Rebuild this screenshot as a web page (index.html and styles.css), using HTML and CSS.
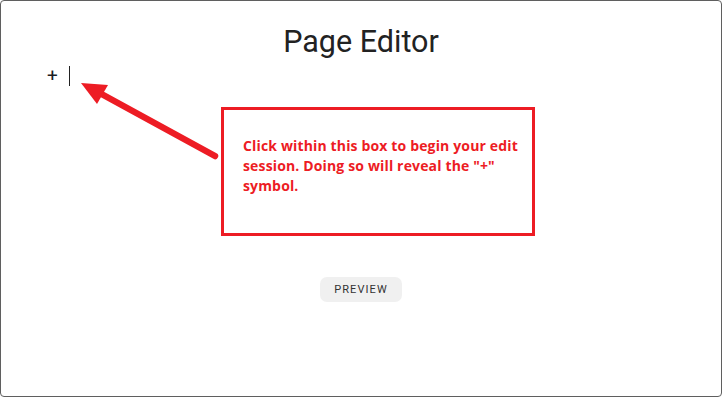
FILE: index.html
```html
<!DOCTYPE html>
<html lang="en">
<head>
    <meta charset="UTF-8">
    <meta name="viewport" content="width=device-width, initial-scale=1.0">
    <title>Page Editor</title>
    <link rel="stylesheet" href="styles.css">
</head>
<body>
    <div class="frame">
        <h1 class="title">Page Editor</h1>
        <div class="editor-row">
            <span class="add-btn">+</span>
            <span class="caret"></span>
        </div>
        <div class="actions">
            <button class="preview-btn">PREVIEW</button>
        </div>

        <!-- annotation layer -->
        <svg class="arrow" width="722" height="397" viewBox="0 0 722 397">
            <line x1="215" y1="156" x2="96" y2="91" stroke="#ed1c24" stroke-width="6.5" stroke-linecap="round"/>
            <polygon points="81,83 108,85 97,104" fill="#ed1c24"/>
        </svg>
        <div class="callout">
            Click within this box to begin your edit session. Doing so will reveal the "+" symbol.
        </div>
    </div>
</body>
</html>
```

FILE: styles.css
```css
body {
    margin: 0;
    background: #fff;
    font-family: Roboto, "Liberation Sans", sans-serif;
}
.frame {
    position: relative;
    box-sizing: border-box;
    width: 722px;
    height: 397px;
    border: 1px solid #5f5f5f;
    border-radius: 4px;
    background: #fff;
}
.title {
    margin: 25px 0 0;
    font-size: 30.5px;
    line-height: 32px;
    font-weight: 400;
    color: #222;
    text-align: center;
}
.editor-row {
    display: flex;
    align-items: center;
    height: 20px;
    margin-top: 8px;
    padding-left: 46px;
}
.add-btn {
    font-size: 19px;
    line-height: 20px;
    font-weight: 400;
    color: #1d1d24;
}
.caret {
    width: 1px;
    height: 20px;
    margin-left: 11px;
    background: #222;
}
.actions {
    display: flex;
    justify-content: center;
    margin-top: 191px;
}
.preview-btn {
    width: 82px;
    height: 25px;
    border: none;
    border-radius: 7px;
    background: #f0f0f0;
    color: #333;
    font-family: Roboto, "Liberation Sans", sans-serif;
    font-size: 11px;
    font-weight: 400;
    letter-spacing: 1.1px;
    padding: 0;
    cursor: pointer;
}
.arrow {
    position: absolute;
    left: -1px;
    top: -1px;
}
.callout {
    position: absolute;
    left: 220px;
    top: 106px;
    box-sizing: border-box;
    width: 314px;
    height: 129px;
    border: 3px solid #ed1c24;
    padding: 26px 8px 0 19px;
    color: #ed1c24;
    font-family: "Open Sans", "Noto Sans", sans-serif;
    font-size: 14px;
    font-weight: 700;
    line-height: 20px;
    letter-spacing: 0.15px;
}
```
